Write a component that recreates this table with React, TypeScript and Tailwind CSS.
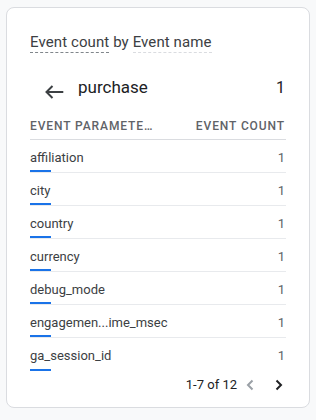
import React from "react";

const rows = [
  { name: "affiliation", count: 1 },
  { name: "city", count: 1 },
  { name: "country", count: 1 },
  { name: "currency", count: 1 },
  { name: "debug_mode", count: 1 },
  { name: "engagemen...ime_msec", count: 1 },
  { name: "ga_session_id", count: 1 },
];

function BackArrow() {
  return (
    <svg width="24" height="24" viewBox="0 0 24 24" fill="none" className="shrink-0">
      <path d="M21.3 16H4.5M10.5 10L4.5 16L10.5 22" stroke="#3c4043" strokeWidth="2" />
    </svg>
  );
}

function Chevron({ dir, color }: { dir: "left" | "right"; color: string }) {
  const d = dir === "left" ? "M14.5 7.5L10 12L14.5 16.5" : "M9.5 7.5L14 12L9.5 16.5";
  return (
    <svg width="24" height="24" viewBox="0 0 24 24" fill="none" className="shrink-0">
      <path d={d} stroke={color} strokeWidth="2" />
    </svg>
  );
}

export default function App() {
  return (
    <div className="w-[316px] h-[420px] bg-[#f8f9fa] pt-[7px] px-[6px] font-['Roboto',sans-serif]">
      <div className="h-[401px] bg-white border border-[#dadce0] rounded-[8px] px-[23px] pt-[24px]">
        <div className="text-[15px] leading-[20px] tracking-[0.1px] text-[#3c4043]">
          <span className="inline-block border-b border-dashed border-[#80868b]">Event count</span>{" "}
          by{" "}
          <span className="inline-block border-b border-dashed border-[#dadce0]">Event name</span>
        </div>

        <div className="mt-[11px] h-[48px] flex items-center">
          <div className="ml-[12px]">
            <BackArrow />
          </div>
          <span className="ml-[12px] flex-1 text-[17px] text-[#202124]">purchase</span>
          <span className="text-[16px] text-[#202124] pr-[1px]">1</span>
        </div>

        <div className="h-[28px] flex items-center justify-between border-b border-[#dadce0] text-[12px] font-medium tracking-[0.9px] text-[#5f6368] uppercase">
          <span className="w-[128px] truncate">Event parameter name</span>
          <span className="mr-[1px]">Event count</span>
        </div>

        {rows.map((r, i) => (
          <div
            key={r.name}
            className={`relative h-[33px] pt-[3px] flex items-center justify-between text-[13px] ${
              i < rows.length - 1 ? "border-b border-[#e8eaed]" : ""
            }`}
          >
            <span className="text-[#3c4043]">{r.name}</span>
            <span className="text-[#5f6368] pr-[1px]">{r.count}</span>
            <div className="absolute left-0 bottom-0 w-[21px] h-[2px] bg-[#1a73e8]" />
          </div>
        ))}

        <div className="mt-[2px] h-[24px] flex items-center justify-end -mr-[5px]">
          <span className="text-[13px] text-[#202124]">1-7 of 12</span>
          <div className="ml-[1px]">
            <Chevron dir="left" color="#9aa0a6" />
          </div>
          <div className="ml-[5px]">
            <Chevron dir="right" color="#202124" />
          </div>
        </div>
      </div>
    </div>
  );
}
